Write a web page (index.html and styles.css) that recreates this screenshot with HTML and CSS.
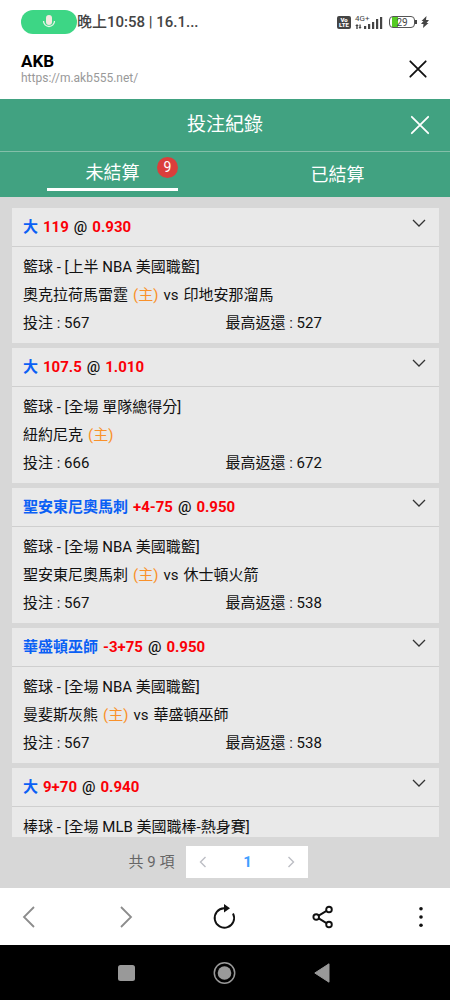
FILE: index.html
```html
<!DOCTYPE html>
<html lang="zh-Hant">
<head>
<meta charset="utf-8">
<meta name="viewport" content="width=device-width, initial-scale=1">
<title>投注紀錄</title>
<link rel="stylesheet" href="styles.css">
</head>
<body>
<div class="status">
  <span class="mic"><svg width="14" height="16" viewBox="0 0 14 16"><rect x="4" y="1" width="6" height="10" rx="3" fill="#f4e9e0"/><path d="M1.500 7a5.500 5.500 0 0 0 11 0" fill="none" stroke="#e4f5e6" stroke-width="1.300"/></svg></span>
  <span class="clock">晚上10:58 | 16.1...</span>
  <span class="signals">
    <span class="volte"><span>Vo</span><span>LTE</span></span>
    <span class="network">
      <span class="gen">4G+</span>
      <svg width="28" height="13" viewBox="0 0 28 13"><g fill="#444"><path d="M2 8l1.800 2H2.700v3H1.300v-3H.2zM5 13l-1.500-2h.9V8.500h1.300V11h.9z"/><rect x="9" y="10" width="2.200" height="3"/><rect x="13" y="8" width="2.200" height="5"/><rect x="17" y="6" width="2.200" height="7"/><rect x="21" y="3" width="2.200" height="10"/><rect x="25" y="1" width="2.200" height="12"/></g></svg>
    </span>
    <span class="battery">29</span>
    <svg class="bolt" width="8" height="12" viewBox="0 0 8 12"><path d="M5.500 0 .5 5h2L0 8h2.500L2 12l5.500-5h-2L8 4H5z" fill="#444"/></svg>
  </span>
</div>
<header class="app">
  <div>
    <div class="app-name">AKB</div>
    <a class="app-url" href="#">https://m.akb555.net/</a>
  </div>
  <button class="icon-btn" aria-label="關閉"><svg width="18" height="18" viewBox="0 0 18 18"><path d="M1.300 1.300l15.400 15.400M16.700 1.300L1.300 16.700" stroke="#111" stroke-width="1.800" stroke-linecap="round"/></svg></button>
</header>
<main class="page">
  <div class="title-bar">
    <h1>投注紀錄</h1>
    <button class="icon-btn title-close" aria-label="關閉投注紀錄"><svg width="20" height="20" viewBox="0 0 20 20"><path d="M1.800 1.800l16.400 16.400M18.200 1.800L1.800 18.200" stroke="#fff" stroke-width="1.800" stroke-linecap="round"/></svg></button>
  </div>
  <nav class="tabs">
    <div class="tab"><button class="tab-btn active">未結算<span class="badge">9</span></button></div>
    <div class="tab"><button class="tab-btn">已結算</button></div>
  </nav>
  <section class="content">
    <div class="list">
      <article class="bet">
        <div class="bet-head"><b class="pick">大</b><b class="num">119</b><b class="at">@</b><b class="num">0.930</b><button class="toggle" aria-label="展開"><svg width="14" height="8" viewBox="0 0 14 8"><path d="M1 1l6 6 6-6"/></svg></button></div>
        <div class="bet-body">
          <div>籃球 - [上半 NBA 美國職籃]</div>
          <div class="teams"><span>奧克拉荷馬雷霆</span><span class="home">(主)</span><span>vs</span><span>印地安那溜馬</span></div>
          <div class="money"><span>投注 : 567</span><span>最高返還 : 527</span></div>
        </div>
      </article>
      <article class="bet">
        <div class="bet-head"><b class="pick">大</b><b class="num">107.5</b><b class="at">@</b><b class="num">1.010</b><button class="toggle" aria-label="展開"><svg width="14" height="8" viewBox="0 0 14 8"><path d="M1 1l6 6 6-6"/></svg></button></div>
        <div class="bet-body">
          <div>籃球 - [全場 單隊總得分]</div>
          <div class="teams"><span>紐約尼克</span><span class="home">(主)</span></div>
          <div class="money"><span>投注 : 666</span><span>最高返還 : 672</span></div>
        </div>
      </article>
      <article class="bet">
        <div class="bet-head"><b class="pick">聖安東尼奧馬刺</b><b class="num">+4-75</b><b class="at">@</b><b class="num">0.950</b><button class="toggle" aria-label="展開"><svg width="14" height="8" viewBox="0 0 14 8"><path d="M1 1l6 6 6-6"/></svg></button></div>
        <div class="bet-body">
          <div>籃球 - [全場 NBA 美國職籃]</div>
          <div class="teams"><span>聖安東尼奧馬刺</span><span class="home">(主)</span><span>vs</span><span>休士頓火箭</span></div>
          <div class="money"><span>投注 : 567</span><span>最高返還 : 538</span></div>
        </div>
      </article>
      <article class="bet">
        <div class="bet-head"><b class="pick">華盛頓巫師</b><b class="num">-3+75</b><b class="at">@</b><b class="num">0.950</b><button class="toggle" aria-label="展開"><svg width="14" height="8" viewBox="0 0 14 8"><path d="M1 1l6 6 6-6"/></svg></button></div>
        <div class="bet-body">
          <div>籃球 - [全場 NBA 美國職籃]</div>
          <div class="teams"><span>曼斐斯灰熊</span><span class="home">(主)</span><span>vs</span><span>華盛頓巫師</span></div>
          <div class="money"><span>投注 : 567</span><span>最高返還 : 538</span></div>
        </div>
      </article>
      <article class="bet">
        <div class="bet-head"><b class="pick">大</b><b class="num">9+70</b><b class="at">@</b><b class="num">0.940</b><button class="toggle" aria-label="展開"><svg width="14" height="8" viewBox="0 0 14 8"><path d="M1 1l6 6 6-6"/></svg></button></div>
        <div class="bet-body">
          <div>棒球 - [全場 MLB 美國職棒-熱身賽]</div>
        </div>
      </article>
    </div>
    <div class="pager">
      <span>共 9 項</span>
      <div class="pages">
        <button aria-label="上一頁"><svg width="8" height="12" viewBox="0 0 8 12"><path d="M6.500 1L1.500 6l5 5"/></svg></button>
        <button class="current">1</button>
        <button aria-label="下一頁"><svg width="8" height="12" viewBox="0 0 8 12"><path d="M1.500 1l5 5-5 5"/></svg></button>
      </div>
    </div>
  </section>
</main>
<nav class="browser-bar">
  <button class="icon-btn" aria-label="返回"><svg width="24" height="24" viewBox="0 0 24 24"><path d="M17 2L7 12l10 10" fill="none" stroke="#8c8c8c" stroke-width="1.800"/></svg></button>
  <button class="icon-btn" aria-label="前進"><svg width="24" height="24" viewBox="0 0 24 24"><path d="M6 2l10 10L6 22" fill="none" stroke="#8c8c8c" stroke-width="1.800"/></svg></button>
  <button class="icon-btn" aria-label="重新整理"><svg width="24" height="26" viewBox="0 0 24 26"><path d="M20 9.500A9.700 9.700 0 1 1 11 4.300h2" fill="none" stroke="#111" stroke-width="1.900"/><path d="M11 0l6 4.300-6 4.300z" fill="#111"/></svg></button>
  <button class="icon-btn" aria-label="分享"><svg width="24" height="24" viewBox="0 0 24 24"><g fill="none" stroke="#111" stroke-width="1.900"><circle cx="5.200" cy="12" r="2.800"/><circle cx="18" cy="4.500" r="2.800"/><circle cx="18" cy="19.500" r="2.800"/><path d="M7.700 10.600l7.800-4.700M7.700 13.400l7.800 4.700"/></g></svg></button>
  <button class="icon-btn" aria-label="更多"><svg width="24" height="24" viewBox="0 0 24 24"><g fill="#111"><circle cx="12" cy="3.700" r="1.800"/><circle cx="12" cy="12" r="1.800"/><circle cx="12" cy="20.300" r="1.800"/></g></svg></button>
</nav>
<nav class="system-bar">
  <button class="icon-btn" aria-label="最近使用"><svg width="24" height="24" viewBox="0 0 24 24"><rect x="3" y="4" width="17" height="16" rx="2.500" fill="#999"/></svg></button>
  <button class="icon-btn" aria-label="主畫面"><svg width="24" height="24" viewBox="0 0 24 24"><circle cx="11.500" cy="12" r="10.200" fill="none" stroke="#999" stroke-width="1.500"/><circle cx="11.500" cy="12" r="6.800" fill="#999"/></svg></button>
  <button class="icon-btn" aria-label="系統返回"><svg width="24" height="24" viewBox="0 0 24 24"><path d="M18 2.800v18.400L3.800 12z" fill="#999" stroke="#999" stroke-linejoin="round"/></svg></button>
</nav>
</body>
</html>
```
FILE: styles.css
```css
* { box-sizing: border-box; }

body {
  margin: 0;
  height: 100vh;
  display: flex;
  flex-direction: column;
  background: #fff;
  color: #111;
  font-family: Roboto, "Noto Sans CJK TC", sans-serif;
  font-size: 15px;
}

button {
  margin: 0;
  padding: 0;
  border: 0;
  background: none;
  color: inherit;
  font: inherit;
}

svg { display: block; }

.icon-btn {
  display: flex;
  align-items: center;
  justify-content: center;
}

/* Phone status bar */
.status {
  display: flex;
  align-items: center;
  height: 44px;
  padding: 0 21px;
  color: #444;
}

.mic {
  display: flex;
  align-items: center;
  justify-content: center;
  width: 56px;
  height: 24px;
  border-radius: 12px;
  background: #3dd685;
}

.clock {
  font-family: Roboto, "Noto Sans CJK TC", sans-serif;
  font-weight: 500;
  line-height: 22px;
}

.signals {
  display: flex;
  align-items: center;
  margin-left: auto;
}

.volte {
  display: flex;
  flex-direction: column;
  align-items: center;
  justify-content: center;
  width: 14px;
  height: 13px;
  margin-right: 4px;
  border-radius: 2px;
  background: #444;
  color: #fff;
  font-size: 6px;
  font-weight: 900;
  line-height: 5px;
}

.network {
  position: relative;
  margin-right: 6px;
}

.gen {
  position: absolute;
  top: -1px;
  left: 0;
  font-size: 8px;
  line-height: 8px;
}

.battery {
  position: relative;
  width: 26px;
  height: 12px;
  margin-right: 6px;
  border: 1px solid #555;
  border-radius: 4px;
  background: linear-gradient(90deg, transparent 2px, #55cb22 2px 8px, transparent 8px);
  font-size: 10px;
  line-height: 11px;
  text-align: center;
}

.battery::after {
  content: "";
  position: absolute;
  top: 3px;
  right: -3px;
  width: 2px;
  height: 4px;
  background: #444;
}

/* In-app browser header */
.app {
  display: flex;
  align-items: center;
  justify-content: space-between;
  height: 55px;
  padding: 0 23px 5px 21px;
}

.app-name {
  color: #000;
  font-size: 17px;
  font-weight: 700;
  line-height: 18px;
}

.app-url {
  display: block;
  color: #999;
  font-size: 12px;
  line-height: 16px;
  text-decoration: none;
}

/* Bet record page */
.page {
  flex: 1;
  min-height: 0;
  display: flex;
  flex-direction: column;
}

.title-bar {
  position: relative;
  display: flex;
  align-items: center;
  justify-content: center;
  height: 53px;
  border-bottom: 1px solid #83bfa9;
  background: #41a281;
  color: #fff;
}

.title-bar h1 {
  margin: 0;
  font-size: 19px;
  font-weight: 400;
  line-height: 28px;
}

.title-close {
  position: absolute;
  top: 16px;
  right: 20px;
}

.tabs {
  display: flex;
  height: 45px;
  background: #41a281;
  color: #fff;
}

.tab {
  flex: 1;
  display: flex;
  justify-content: center;
  align-items: center;
}

.tab-btn {
  position: relative;
  width: 131px;
  font-size: 18px;
  line-height: 30px;
}

.tab-btn.active { border-bottom: 3px solid #fff; }

.badge {
  position: absolute;
  top: -1px;
  right: 0;
  width: 21px;
  height: 21px;
  border-radius: 50%;
  background: #db3e3b;
  font-size: 14px;
  line-height: 21px;
  text-align: center;
}

.content {
  flex: 1;
  min-height: 0;
  display: flex;
  flex-direction: column;
  padding: 11px 11px 10px 12px;
  background: #d7d7d7;
}

.list {
  flex: 1;
  min-height: 0;
  overflow: hidden;
  display: flex;
  flex-direction: column;
  gap: 5px;
}

.bet {
  flex: none;
  background: #e9e9e9;
}

.bet-head {
  display: flex;
  align-items: center;
  gap: 5px;
  height: 39px;
  padding: 0 13px 0 11px;
  border-bottom: 1px solid #cfcfcf;
  line-height: 38px;
}

.pick { color: #0a60f5; }
.num { color: #fb0007; }
.at { font-weight: 500; }

.toggle {
  margin: 0 0 8px auto;
}

.toggle path {
  fill: none;
  stroke: #333;
  stroke-width: 1.3;
}

.bet-body {
  padding: 6px 11px;
  line-height: 28px;
}

.teams {
  display: flex;
  gap: 5px;
}

.home { color: #f9912a; }

.money {
  display: grid;
  grid-template-columns: 1fr 1fr;
}

.pager {
  display: flex;
  align-items: center;
  justify-content: center;
  gap: 12px;
  margin-top: 9px;
  padding-right: 14px;
  color: #666;
  line-height: 32px;
}

.pages {
  display: flex;
  justify-content: space-between;
  width: 122px;
  height: 32px;
  background: #fff;
}

.pages button {
  display: flex;
  align-items: center;
  justify-content: center;
  width: 34px;
}

.pages path {
  fill: none;
  stroke: #bcbec4;
  stroke-width: 1.4;
}

.pages .current {
  color: #409eff;
  font-weight: 700;
}

/* Browser toolbar */
.browser-bar {
  display: flex;
  align-items: center;
  justify-content: space-between;
  height: 57px;
  padding: 0 17px;
}

/* Android navigation */
.system-bar {
  display: flex;
  align-items: center;
  justify-content: center;
  gap: 74px;
  height: 55px;
  background: #000;
}
```
